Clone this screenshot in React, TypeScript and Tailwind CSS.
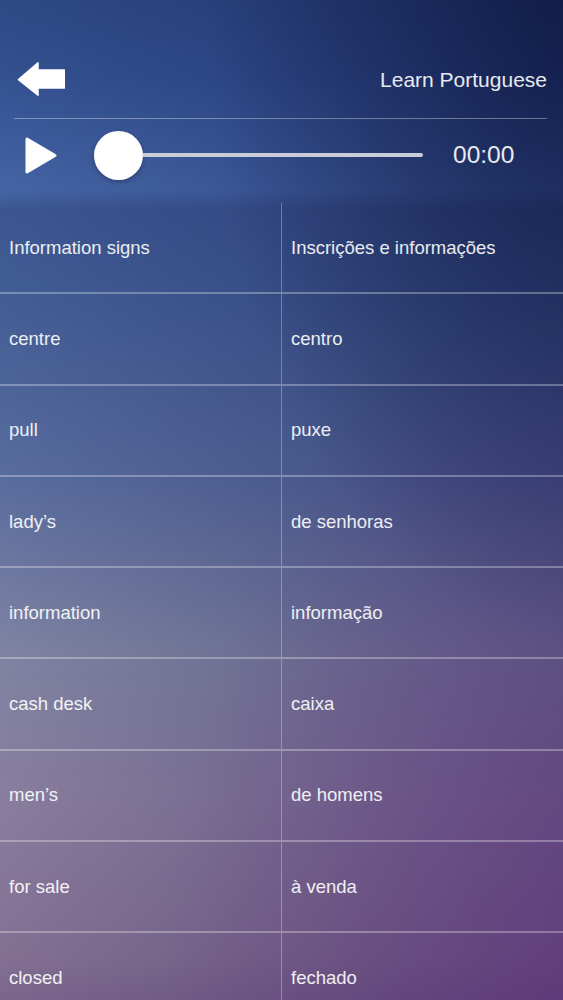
const ROWS: [string, string][] = [
  ['Information signs', 'Inscrições e informações'],
  ['centre', 'centro'],
  ['pull', 'puxe'],
  ['lady’s', 'de senhoras'],
  ['information', 'informação'],
  ['cash desk', 'caixa'],
  ['men’s', 'de homens'],
  ['for sale', 'à venda'],
  ['closed', 'fechado'],
]

function BackArrow() {
  return (
    <svg width="48" height="34" viewBox="0 0 48 34" className="block">
      <path
        d="M1.5 17.6 L21 0.8 L21 8 L47.5 8 L47.5 26 L21 26 L21 33.2 Z"
        fill="#ffffff"
        stroke="#ffffff"
        strokeWidth="1.5"
        strokeLinejoin="round"
      />
    </svg>
  )
}

function PlayIcon() {
  return (
    <svg width="32" height="37" viewBox="0 0 32 37" className="block">
      <path
        d="M2 2 L30 18.5 L2 35 Z"
        fill="#ffffff"
        stroke="#ffffff"
        strokeWidth="3"
        strokeLinejoin="round"
      />
    </svg>
  )
}

export default function App() {
  return (
    <div
      className="w-[563px] h-[1000px] overflow-hidden text-white bg-[#2a4580] bg-[image:radial-gradient(ellipse_at_100%_0%,rgba(8,16,50,0.6),transparent_45%),radial-gradient(ellipse_at_100%_100%,rgba(115,40,135,0.38),transparent_50%),linear-gradient(to_right,rgba(255,255,255,0.04),rgba(18,18,72,0.34)),linear-gradient(to_bottom,#26427f_0%,#2c4a8c_8%,#3d5ea0_19%,#354f8c_21%,#3a5690_29%,#52669a_48%,#7a7e9e_65%,#84789a_80%,#7e6a8e_96%,#765f88_100%)]"
      style={{ fontFamily: '"Liberation Sans", Arial, sans-serif' }}
    >
      {/* header */}
      <div className="h-[203px] flex flex-col">
        <div className="mt-[62px] h-[34px] flex items-center justify-between pl-[17px] pr-[16px]">
          <BackArrow />
          <span className="text-[21px] text-white/90 leading-none">Learn Portuguese</span>
        </div>
        <div className="mt-[22px] mx-[14px] mr-[16px] h-px bg-white/35" />
        <div className="mt-[11px] h-[50px] flex items-center pl-[25px]">
          <PlayIcon />
          <div className="ml-[37px] w-[329px] flex items-center">
            <div className="w-[49px] h-[49px] rounded-full bg-white shrink-0 shadow-[0_2px_4px_rgba(0,0,0,0.25)]" />
            <div className="flex-1 h-[4px] bg-[#c9cdd8] rounded-r-full" />
          </div>
          <span className="ml-[30px] text-[24.5px] text-white/90 leading-none">00:00</span>
        </div>
      </div>

      {/* phrase table */}
      <div className="flex flex-col">
        {ROWS.map(([en, pt], i) => (
          <div
            key={i}
            className="h-[91.25px] shrink-0 grid grid-cols-[282px_1fr] border-b-2 border-white/30"
          >
            <div className="flex items-center pl-[9px] border-r-[1.5px] border-white/30">
              <span className="text-[18.5px] text-white/90">{en}</span>
            </div>
            <div className="flex items-center pl-[9px]">
              <span className="text-[18.5px] text-white/90">{pt}</span>
            </div>
          </div>
        ))}
      </div>
    </div>
  )
}
